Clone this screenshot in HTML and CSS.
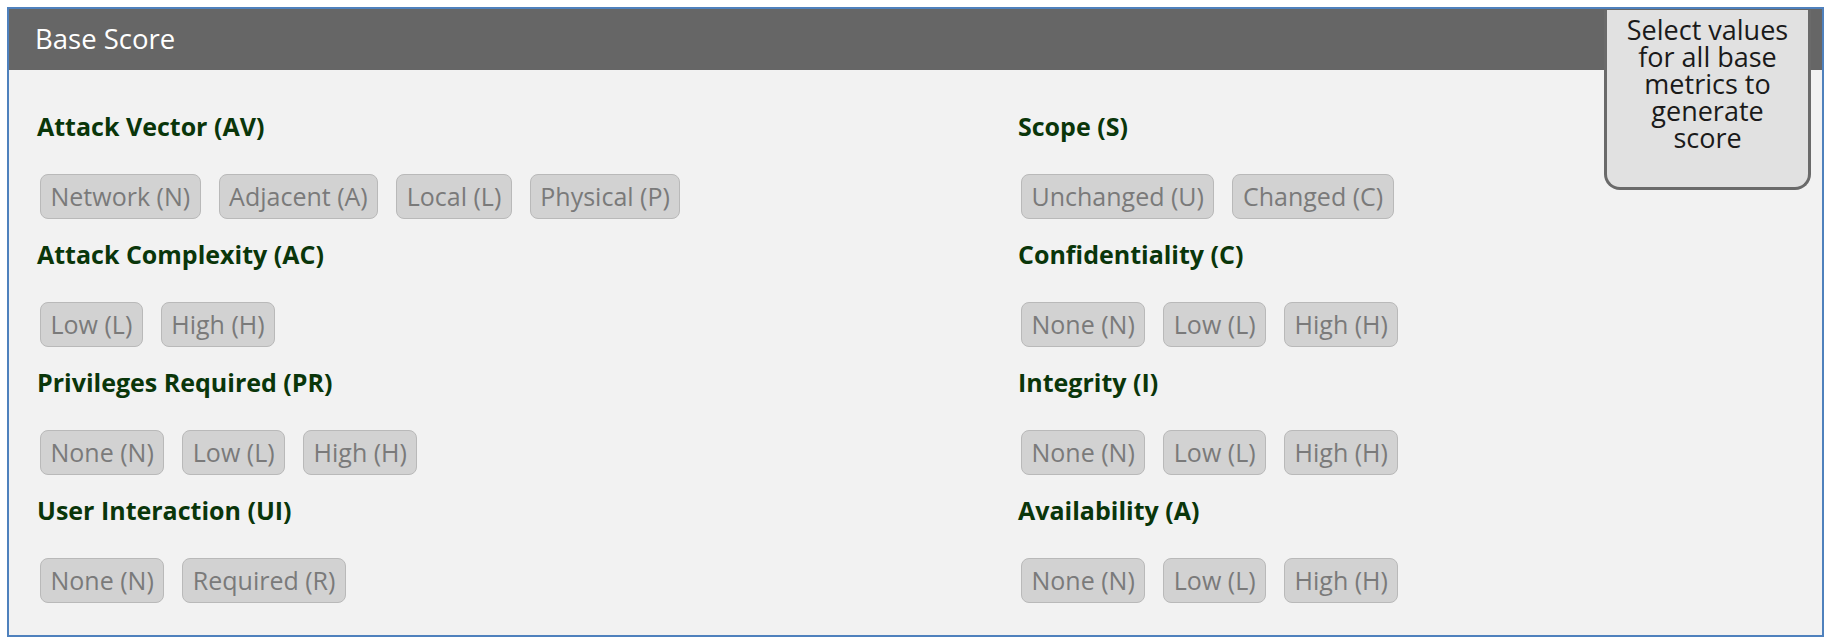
FILE: index.html
```html
<!DOCTYPE html>
<html lang="en">

<head>
    <meta charset="utf-8">
    <meta name="viewport" content="width=device-width, initial-scale=1.0">
    <title>CVSS Base Score</title>
    <link rel="stylesheet" href="styles.css">
</head>

<body>
    <div class="ramme">
        <header class="panel_top">
            <h2>Base Score</h2>
        </header>

        <div class="score_boks">Select values for all base metrics to generate score</div>

        <section class="metrikker">
            <div class="kolonne">
                <div class="metrik">
                    <h3>Attack Vector (AV)</h3>
                    <div class="knapper">
                        <button>Network (N)</button>
                        <button>Adjacent (A)</button>
                        <button>Local (L)</button>
                        <button>Physical (P)</button>
                    </div>
                </div>
                <div class="metrik">
                    <h3>Attack Complexity (AC)</h3>
                    <div class="knapper">
                        <button>Low (L)</button>
                        <button>High (H)</button>
                    </div>
                </div>
                <div class="metrik">
                    <h3>Privileges Required (PR)</h3>
                    <div class="knapper">
                        <button>None (N)</button>
                        <button>Low (L)</button>
                        <button>High (H)</button>
                    </div>
                </div>
                <div class="metrik">
                    <h3>User Interaction (UI)</h3>
                    <div class="knapper">
                        <button>None (N)</button>
                        <button>Required (R)</button>
                    </div>
                </div>
            </div>

            <div class="kolonne">
                <div class="metrik">
                    <h3>Scope (S)</h3>
                    <div class="knapper">
                        <button>Unchanged (U)</button>
                        <button>Changed (C)</button>
                    </div>
                </div>
                <div class="metrik">
                    <h3>Confidentiality (C)</h3>
                    <div class="knapper">
                        <button>None (N)</button>
                        <button>Low (L)</button>
                        <button>High (H)</button>
                    </div>
                </div>
                <div class="metrik">
                    <h3>Integrity (I)</h3>
                    <div class="knapper">
                        <button>None (N)</button>
                        <button>Low (L)</button>
                        <button>High (H)</button>
                    </div>
                </div>
                <div class="metrik">
                    <h3>Availability (A)</h3>
                    <div class="knapper">
                        <button>None (N)</button>
                        <button>Low (L)</button>
                        <button>High (H)</button>
                    </div>
                </div>
            </div>
        </section>
    </div>
</body>

</html>
```

FILE: styles.css
```css
html,
body {
    background-color: #ffffff;
    font-family: "Open Sans", sans-serif;
    margin: 0px;
}

.ramme {
    position: relative;
    margin: 7px 7px 0px 7px;
    border: 2px solid #4f81bd;
    background-color: #f2f2f2;
}

.panel_top {
    background-color: #666666;
    height: 61px;
    padding-left: 26px;
}

.panel_top h2 {
    margin: 0px;
    font-size: 27.5px;
    font-weight: normal;
    line-height: 60px;
    color: #ffffff;
}

/* boksen oppe i hjoernet ligger oven paa baaren */
.score_boks {
    position: absolute;
    top: 1px;
    right: 11px;
    width: 207px;
    height: 180px;
    box-sizing: border-box;
    padding: 6px 10px 0px 10px;
    background-color: #e1e1e1;
    border: 3px solid #6a6a6a;
    border-top: none;
    border-radius: 0px 0px 16px 16px;
    font-size: 27px;
    line-height: 27px;
    text-align: center;
    color: #1a1a1a;
}

.metrikker {
    display: grid;
    grid-template-columns: 981px 1fr;
    padding: 41px 0px 32px 28px;
}

.metrik {
    margin-bottom: 20px;
}

.metrik:last-child {
    margin-bottom: 0px;
}

h3 {
    margin: 0px 0px 33px 0px;
    font-size: 25px;
    font-weight: bold;
    line-height: 30px;
    color: #0a360a;
}

.knapper {
    display: flex;
    gap: 18px;
    padding-left: 3px;
}

button {
    font-family: "Open Sans", sans-serif;
    font-size: 25px;
    line-height: 33px;
    padding: 5px 9.5px;
    background-color: #d2d2d2;
    border: 1px solid #b9b9b9;
    border-radius: 8px;
    color: #7a7a7a;
}
```
